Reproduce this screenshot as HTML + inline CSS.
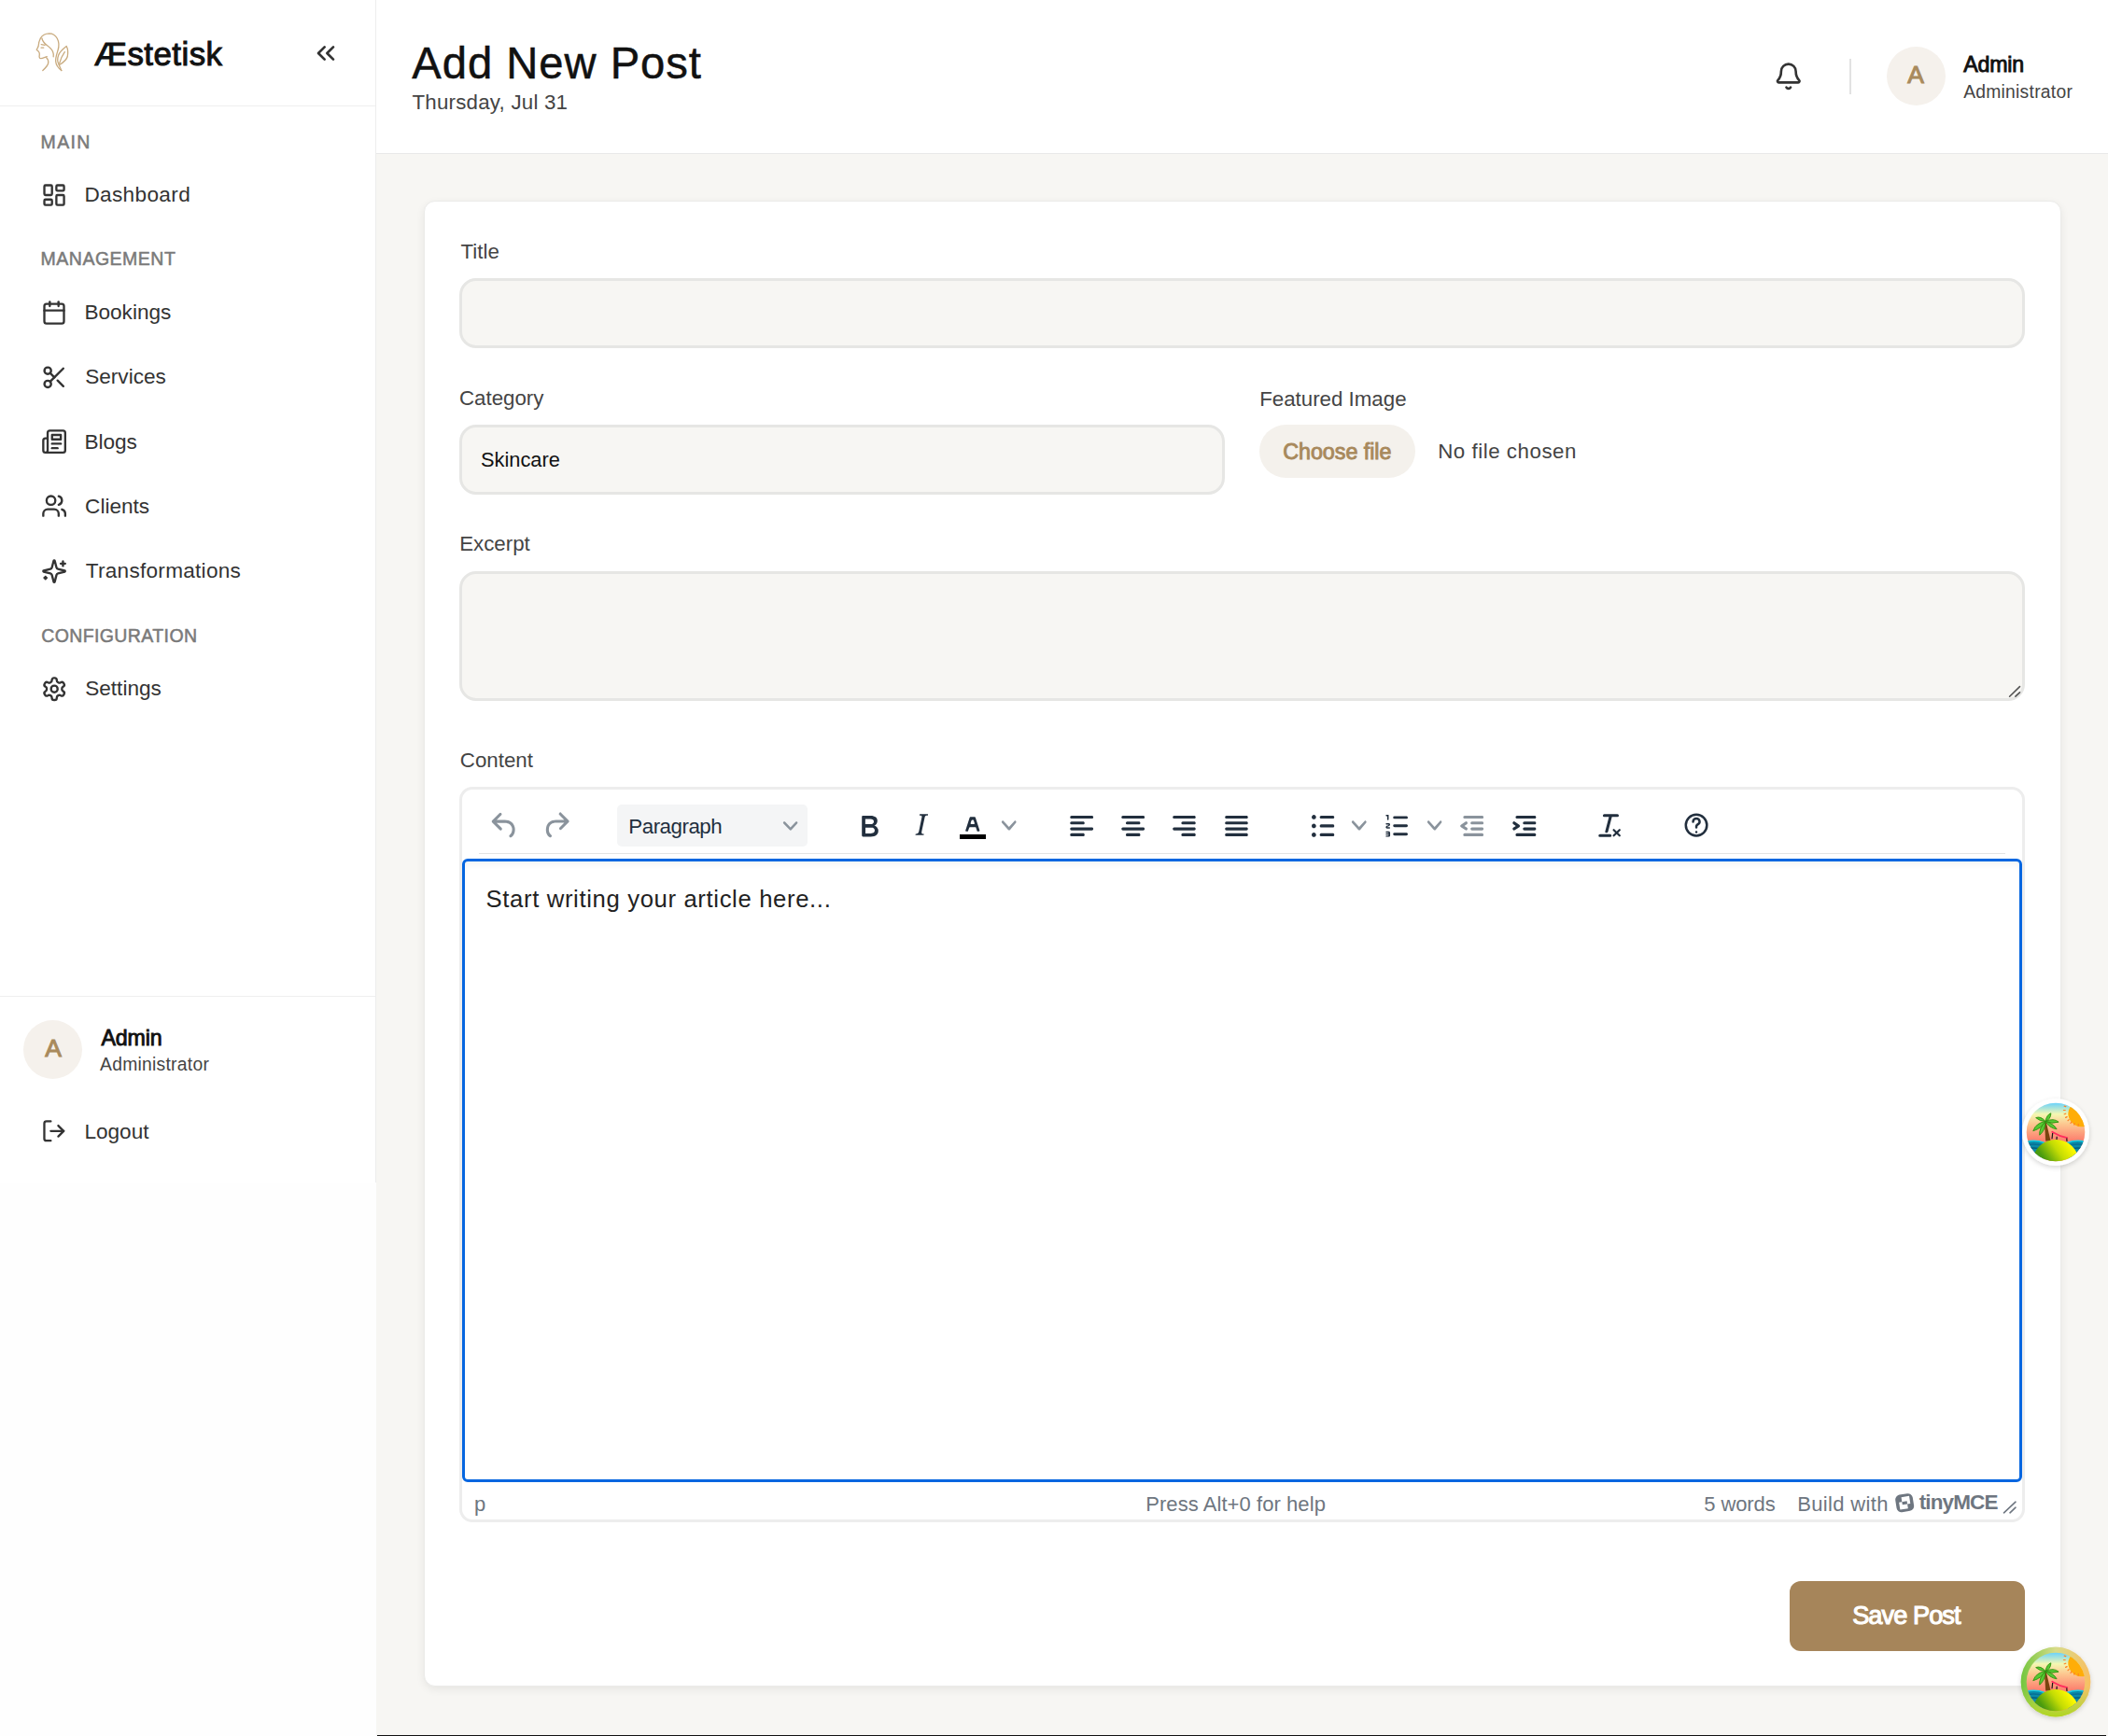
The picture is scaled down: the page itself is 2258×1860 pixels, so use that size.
<!DOCTYPE html>
<html><head><meta charset="utf-8"><title>Add New Post</title>
<style>
html,body{margin:0;padding:0;}
body{width:2258px;height:1860px;position:relative;overflow:hidden;background:#f7f6f3;font-family:"Liberation Sans", sans-serif;}
.t{position:absolute;line-height:1;white-space:nowrap;}
.b{position:absolute;box-sizing:border-box;}
.i{position:absolute;overflow:visible;}
</style></head><body>

<div class="b" style="left:0px;top:0px;width:403px;height:1860px;background:#fefefe;"></div>
<div class="b" style="left:0px;top:0px;width:403px;height:1267px;background:#fff;border-right:1px solid #ededed;"></div>
<div class="b" style="left:0px;top:113px;width:402px;height:1px;background:#efefef;"></div>
<div class="b" style="left:0px;top:1067px;width:402px;height:1px;background:#efefef;"></div>
<div class="b" style="left:403px;top:0px;width:1855px;height:165px;background:#fff;border-bottom:1px solid #e9e9e9;"></div>
<div class="b" style="left:404px;top:1859px;width:1852px;height:1px;background:#111;"></div>
<div class="b" style="left:454px;top:215px;width:1753.5px;height:1592px;background:#fff;border-radius:12px;border:1px solid #ebebe9;box-shadow:0 3px 10px rgba(0,0,0,0.07);"></div>
<svg class="i" style="left:30px;top:28px" width="55" height="55" viewBox="0 0 55 55" fill="none" stroke="#c9ab7f" stroke-width="1.3" stroke-linecap="round" stroke-linejoin="round">
<path d="M13.3 13.0 C15 10 18.5 7.9 22.8 7.8 C26.5 7.8 29.5 10 31.3 13.2 C33.2 16.7 33.4 21.5 32 26 C30.6 30.5 29.3 34 29.7 38 C30.1 42 32.5 45 35.8 47.5"/>
<path d="M13.3 13.2 C12 15.5 11.3 18.5 11.1 21.5 C10.5 23.2 9.6 24.5 9.2 25.3 L11.1 26.9 C12.2 28 12.5 29.3 12.3 30.5 C12 31.8 11.8 33.3 12.6 34.2 C13.5 34.9 15.5 34.4 17.5 33.6 L20.3 32.6"/>
<path d="M19.6 33.6 C21.5 35.5 22.2 37.5 21.6 40 C21 42.5 18.5 45 15.8 47.5"/>
<path d="M14.9 13.0 C15.5 16 17.5 18.5 20.3 20.6 C23.3 22.8 25.5 24.7 26.6 27.5 C27.5 29.8 27.6 31.5 27.2 32.8"/>
<path d="M14.2 19.6 L18 20.3"/><path d="M14 23.1 L16.7 23.2"/>
<path d="M33.3 41.8 C31.5 38.5 31.2 35 32.6 31.2 C34 27.6 37.5 24.3 41.2 21.5 C42.6 24 43 28.5 42.3 32.5 C41.3 36.5 38.5 38.5 33.6 41.5"/>
<path d="M33.6 40.2 C35 35 36.8 31 39.3 27.6"/>
<path d="M33.3 41.8 L35.8 47.5"/>
</svg>
<div class="t" style="left:101.05px;top:41.45px;font-size:34.9px;color:#111;-webkit-text-stroke:1.0px #111;letter-spacing:0.457px;">Æstetisk</div>
<svg class="i" style="left:332.53px;top:40.90px" width="32.01" height="32.01" viewBox="0 0 24 24" fill="none" stroke="#333" stroke-width="2" stroke-linecap="round" stroke-linejoin="round"><path d="m11 17-5-5 5-5"/><path d="m18 17-5-5 5-5"/></svg>
<div class="t" style="left:43.60px;top:143.19px;font-size:19.5px;color:#7a7a7a;-webkit-text-stroke:0.5px #7a7a7a;letter-spacing:1.367px;">MAIN</div>
<div class="t" style="left:43.60px;top:267.79px;font-size:19.5px;color:#7a7a7a;-webkit-text-stroke:0.5px #7a7a7a;letter-spacing:0.500px;">MANAGEMENT</div>
<div class="t" style="left:44.20px;top:671.99px;font-size:19.5px;color:#7a7a7a;-webkit-text-stroke:0.5px #7a7a7a;letter-spacing:0.392px;">CONFIGURATION</div>
<div class="t" style="left:90.40px;top:198.26px;font-size:22.6px;color:#333;letter-spacing:0.350px;">Dashboard</div>
<div class="t" style="left:90.40px;top:323.56px;font-size:22.6px;color:#333;">Bookings</div>
<div class="t" style="left:91.20px;top:392.86px;font-size:22.6px;color:#333;">Services</div>
<div class="t" style="left:90.40px;top:462.66px;font-size:22.6px;color:#333;">Blogs</div>
<div class="t" style="left:91.10px;top:532.36px;font-size:22.6px;color:#333;">Clients</div>
<div class="t" style="left:91.70px;top:600.86px;font-size:22.6px;color:#333;letter-spacing:0.271px;">Transformations</div>
<div class="t" style="left:91.20px;top:726.56px;font-size:22.6px;color:#333;">Settings</div>
<div class="t" style="left:90.40px;top:1201.66px;font-size:22.6px;color:#333;">Logout</div>
<svg class="i" style="left:44.06px;top:194.96px" width="28.08" height="28.08" viewBox="0 0 24 24" fill="none" stroke="#333" stroke-width="2" stroke-linecap="round" stroke-linejoin="round"><rect width="7" height="9" x="3" y="3" rx="1"/><rect width="7" height="5" x="14" y="3" rx="1"/><rect width="7" height="9" x="14" y="12" rx="1"/><rect width="7" height="5" x="3" y="16" rx="1"/></svg>
<svg class="i" style="left:44.07px;top:320.83px" width="28.00" height="28.00" viewBox="0 0 24 24" fill="none" stroke="#333" stroke-width="2" stroke-linecap="round" stroke-linejoin="round"><path d="M8 2v4"/><path d="M16 2v4"/><rect width="18" height="18" x="3" y="4" rx="2"/><path d="M3 10h18"/></svg>
<svg class="i" style="left:43.72px;top:389.72px" width="28.62" height="28.62" viewBox="0 0 24 24" fill="none" stroke="#333" stroke-width="2" stroke-linecap="round" stroke-linejoin="round"><circle cx="6" cy="6" r="3"/><path d="M8.12 8.12 12 12"/><path d="M20 4 8.12 15.88"/><circle cx="6" cy="18" r="3"/><path d="M14.8 14.8 20 20"/></svg>
<svg class="i" style="left:44.03px;top:458.82px" width="28.20" height="28.20" viewBox="0 0 24 24" fill="none" stroke="#333" stroke-width="2" stroke-linecap="round" stroke-linejoin="round"><path d="M4 22h16a2 2 0 0 0 2-2V4a2 2 0 0 0-2-2H8a2 2 0 0 0-2 2v16a2 2 0 0 1-2 2Zm0 0a2 2 0 0 1-2-2v-9c0-1.1.9-2 2-2h2"/><path d="M18 14h-8"/><path d="M15 18h-5"/><path d="M10 6h8v4h-8V6Z"/></svg>
<svg class="i" style="left:44.02px;top:527.85px" width="28.23" height="28.23" viewBox="0 0 24 24" fill="none" stroke="#333" stroke-width="2" stroke-linecap="round" stroke-linejoin="round"><path d="M16 21v-2a4 4 0 0 0-4-4H6a4 4 0 0 0-4 4v2"/><circle cx="9" cy="7" r="4"/><path d="M22 21v-2a4 4 0 0 0-3-3.87"/><path d="M16 3.13a4 4 0 0 1 0 7.75"/></svg>
<svg class="i" style="left:44.03px;top:597.73px" width="28.14" height="28.14" viewBox="0 0 24 24" fill="none" stroke="#333" stroke-width="2" stroke-linecap="round" stroke-linejoin="round"><path d="M9.937 15.5A2 2 0 0 0 8.5 14.063l-6.135-1.582a.5.5 0 0 1 0-.962L8.5 9.936A2 2 0 0 0 9.937 8.5l1.582-6.135a.5.5 0 0 1 .963 0L14.063 8.5A2 2 0 0 0 15.5 9.937l6.135 1.581a.5.5 0 0 1 0 .964L15.5 14.063a2 2 0 0 0-1.437 1.437l-1.582 6.135a.5.5 0 0 1-.963 0z"/><path d="M20 3v4"/><path d="M22 5h-4"/><path d="M4 17v2"/><path d="M5 18H3"/></svg>
<svg class="i" style="left:43.75px;top:723.82px" width="28.39" height="28.39" viewBox="0 0 24 24" fill="none" stroke="#333" stroke-width="2" stroke-linecap="round" stroke-linejoin="round"><path d="M12.22 2h-.44a2 2 0 0 0-2 2v.18a2 2 0 0 1-1 1.73l-.43.25a2 2 0 0 1-2 0l-.15-.08a2 2 0 0 0-2.73.73l-.22.38a2 2 0 0 0 .73 2.73l.15.1a2 2 0 0 1 1 1.72v.51a2 2 0 0 1-1 1.74l-.15.09a2 2 0 0 0-.73 2.73l.22.38a2 2 0 0 0 2.73.73l.15-.08a2 2 0 0 1 2 0l.43.25a2 2 0 0 1 1 1.73V20a2 2 0 0 0 2 2h.44a2 2 0 0 0 2-2v-.18a2 2 0 0 1 1-1.73l.43-.25a2 2 0 0 1 2 0l.15.08a2 2 0 0 0 2.73-.73l.22-.39a2 2 0 0 0-.73-2.73l-.15-.08a2 2 0 0 1-1-1.74v-.5a2 2 0 0 1 1-1.74l.15-.09a2 2 0 0 0 .73-2.73l-.22-.38a2 2 0 0 0-2.73-.73l-.15.08a2 2 0 0 1-2 0l-.43-.25a2 2 0 0 1-1-1.73V4a2 2 0 0 0-2-2z"/><circle cx="12" cy="12" r="3"/></svg>
<svg class="i" style="left:43.90px;top:1198.10px" width="27.66" height="27.66" viewBox="0 0 24 24" fill="none" stroke="#333" stroke-width="2" stroke-linecap="round" stroke-linejoin="round"><path d="M9 21H5a2 2 0 0 1-2-2V5a2 2 0 0 1 2-2h4"/><polyline points="16 17 21 12 16 7"/><line x1="21" x2="9" y1="12" y2="12"/></svg>
<div class="b" style="left:25px;top:1093px;width:63px;height:63px;border-radius:50%;background:#f5f1ec;"></div>
<div class="t" style="left:48.15px;top:1109.66px;font-size:26.5px;color:#a98a5c;-webkit-text-stroke:1.0px #a98a5c;">A</div>
<div class="t" style="left:108.45px;top:1100.66px;font-size:23.2px;color:#111;-webkit-text-stroke:0.9px #111;letter-spacing:-0.150px;">Admin</div>
<div class="t" style="left:107.05px;top:1130.86px;font-size:19.3px;color:#444;letter-spacing:0.267px;">Administrator</div>
<div class="t" style="left:441.35px;top:43.64px;font-size:47.2px;color:#111;-webkit-text-stroke:0.5px #111;letter-spacing:0.964px;">Add New Post</div>
<div class="t" style="left:441.45px;top:99.32px;font-size:22.3px;color:#444;letter-spacing:0.227px;">Thursday, Jul 31</div>
<svg class="i" style="left:1899.87px;top:66.09px" width="31.50" height="31.50" viewBox="0 0 24 24" fill="none" stroke="#333" stroke-width="2" stroke-linecap="round" stroke-linejoin="round"><path d="M10.268 21a2 2 0 0 0 3.464 0"/><path d="M3.262 15.326A1 1 0 0 0 4 17h16a1 1 0 0 0 .74-1.673C19.41 13.956 18 12.499 18 8A6 6 0 0 0 6 8c0 4.499-1.411 5.956-2.738 7.326"/></svg>
<div class="b" style="left:1981px;top:63px;width:1.5px;height:38px;background:#e2e2e2;"></div>
<div class="b" style="left:2021px;top:50px;width:63px;height:63px;border-radius:50%;background:#f5f1ec;"></div>
<div class="t" style="left:2043.35px;top:67.36px;font-size:26.5px;color:#a98a5c;-webkit-text-stroke:1.0px #a98a5c;">A</div>
<div class="t" style="left:2103.15px;top:58.26px;font-size:23.2px;color:#111;-webkit-text-stroke:0.9px #111;letter-spacing:-0.150px;">Admin</div>
<div class="t" style="left:2103.15px;top:89.36px;font-size:19.3px;color:#444;letter-spacing:0.258px;">Administrator</div>
<div class="t" style="left:493.55px;top:259.02px;font-size:22.3px;color:#444;">Title</div>
<div class="b" style="left:492px;top:298px;width:1677px;height:75px;border:3px solid #e6e6e4;background:#f7f6f3;border-radius:18px;"></div>
<div class="t" style="left:491.95px;top:415.82px;font-size:22.3px;color:#444;">Category</div>
<div class="b" style="left:492px;top:455px;width:820px;height:75px;border:3px solid #e6e6e4;background:#f7f6f3;border-radius:18px;"></div>
<div class="t" style="left:515.00px;top:482.04px;font-size:21.8px;color:#111;">Skincare</div>
<div class="t" style="left:1349.15px;top:416.62px;font-size:22.3px;color:#444;">Featured Image</div>
<div class="b" style="left:1349px;top:455px;width:167px;height:57px;border-radius:29px;background:#f4f1ec;"></div>
<div class="t" style="left:1374.20px;top:473.17px;font-size:23.3px;color:#a8895c;-webkit-text-stroke:0.9px #a8895c;letter-spacing:-0.030px;">Choose file</div>
<div class="t" style="left:1540.15px;top:472.52px;font-size:22.3px;color:#444;letter-spacing:0.538px;">No file chosen</div>
<div class="t" style="left:492.15px;top:571.82px;font-size:22.3px;color:#444;">Excerpt</div>
<div class="b" style="left:492px;top:612px;width:1677px;height:139px;border:3px solid #e6e6e4;background:#f7f6f3;border-radius:18px;"></div>
<svg class="i" style="left:2150px;top:733px" width="16" height="16" viewBox="0 0 16 16" stroke="#555" stroke-width="1.6" stroke-linecap="round"><path d="M2.6 13.2 L13.5 2.6"/><path d="M8.9 13.2 L13.5 8.8"/></svg>
<div class="t" style="left:492.85px;top:804.02px;font-size:22.3px;color:#444;">Content</div>
<div class="b" style="left:492px;top:843px;width:1677px;height:788px;border:3px solid #ededed;border-radius:14px;background:#fff;"></div>
<svg class="i" style="left:522.09px;top:865.86px" width="37.51" height="37.51" viewBox="0 0 24 24" preserveAspectRatio="none"><path fill="#8a939c" fill-rule="evenodd" d="M6.4 8H12c3.7 0 6.2 2 6.8 5.1.6 2.7-.4 5.6-2.3 6.8a1 1 0 0 1-1-1.8c1.1-.6 1.8-2.7 1.4-4.6-.5-2.1-2.1-3.5-4.9-3.5H6.4l3.3 3.3a1 1 0 1 1-1.4 1.4l-5-5a1 1 0 0 1 0-1.4l5-5a1 1 0 0 1 1.4 1.4L6.4 8Z"/></svg>
<svg class="i" style="left:577.19px;top:866.19px" width="37.35" height="37.35" viewBox="0 0 24 24" preserveAspectRatio="none"><path fill="#8a939c" fill-rule="evenodd" d="M17.6 10H12c-2.8 0-4.4 1.4-4.9 3.5-.4 2 .3 4 1.4 4.6a1 1 0 1 1-1 1.8c-2-1.2-2.9-4.1-2.3-6.8.6-3 3-5.1 6.8-5.1h5.6l-3.3-3.3a1 1 0 1 1 1.4-1.4l5 5a1 1 0 0 1 0 1.4l-5 5a1 1 0 0 1-1.4-1.4l3.3-3.3Z"/></svg>
<div class="b" style="left:661px;top:862px;width:204px;height:44.5px;border-radius:5px;background:#f4f5f6;"></div>
<div class="t" style="left:673.35px;top:875.12px;font-size:22.3px;color:#222f3e;letter-spacing:-0.475px;">Paragraph</div>
<svg class="i" style="left:839.11px;top:876.87px" width="15.39" height="15.87" viewBox="0 0 10 10" preserveAspectRatio="none"><path fill="#8a939c" fill-rule="evenodd" d="M8.7 2.2c.3-.3.8-.3 1 0 .4.4.4.9 0 1.2L5.7 7.8c-.3.3-.9.3-1.2 0L.2 3.4a.8.8 0 0 1 0-1.2c.3-.3.8-.3 1.1 0L5 6l3.7-3.8Z"/></svg>
<svg class="i" style="left:912.00px;top:866.40px" width="38.42" height="38.42" viewBox="0 0 24 24" preserveAspectRatio="none"><path fill="#222f3e" fill-rule="evenodd" d="M7.8 19c-.3 0-.5 0-.6-.2l-.2-.5V5.7c0-.2 0-.4.2-.5l.6-.2h5c1.5 0 2.7.3 3.5 1 .7.6 1.1 1.4 1.1 2.5a3 3 0 0 1-.6 1.9c-.4.6-1 1-1.6 1.2.4.1.9.3 1.3.6s.8.7 1 1.2c.4.4.5 1 .5 1.6 0 1.3-.4 2.3-1.3 3-.8.7-2.1 1-3.8 1H7.8Zm5-8.3c.6 0 1.2-.1 1.6-.5.4-.3.6-.7.6-1.3 0-1.1-.8-1.7-2.3-1.7H9.3v3.5h3.4Zm.5 6c.7 0 1.3-.1 1.7-.4.4-.4.6-.9.6-1.5s-.2-1-.7-1.4c-.4-.3-1-.4-2-.4H9.4v3.8h4Z"/></svg>
<svg class="i" style="left:968.21px;top:865.46px" width="37.47" height="37.47" viewBox="0 0 24 24" preserveAspectRatio="none"><path fill="#222f3e" fill-rule="evenodd" d="m16.7 4.7-.1.9h-.3c-.6 0-1 0-1.4.3-.3.3-.4.6-.5 1.1l-2.1 9.8v.6c0 .5.4.8 1.4.8h.2l-.2.8H8l.2-.8h.2c1.1 0 1.8-.5 2-1.5l2-9.8.1-.5c0-.6-.4-.8-1.4-.8h-.3l.2-.9h5.8Z"/></svg>
<svg class="i" style="left:1021.82px;top:866.30px" width="39.57" height="37.20" viewBox="0 0 24 24" preserveAspectRatio="none"><path fill="#222f3e" fill-rule="evenodd" d="M8.7 16h-.8a.5.5 0 0 1-.5-.6l2.7-9c.1-.3.3-.4.5-.4h2.8c.2 0 .4.1.5.4l2.7 9a.5.5 0 0 1-.5.6h-.8a.5.5 0 0 1-.4-.4l-.7-2.2c0-.3-.3-.4-.5-.4h-3.4c-.2 0-.4.1-.5.4l-.7 2.2c0 .3-.2.4-.4.4Zm2.6-7.6-.6 2a.5.5 0 0 0 .5.6h1.6a.5.5 0 0 0 .5-.6l-.6-2c0-.3-.3-.4-.5-.4h-.4c-.2 0-.4.1-.5.4Z"/></svg>
<div class="b" style="left:1027.6px;top:894.2px;width:28.100000000000136px;height:4.599999999999909px;background:#000;"></div>
<svg class="i" style="left:1073.11px;top:876.47px" width="15.59" height="16.86" viewBox="0 0 10 10" preserveAspectRatio="none"><path fill="#8a939c" fill-rule="evenodd" d="M8.7 2.2c.3-.3.8-.3 1 0 .4.4.4.9 0 1.2L5.7 7.8c-.3.3-.9.3-1.2 0L.2 3.4a.8.8 0 0 1 0-1.2c.3-.3.8-.3 1.1 0L5 6l3.7-3.8Z"/></svg>
<svg class="i" style="left:1140.18px;top:865.81px" width="37.35" height="37.89" viewBox="0 0 24 24" preserveAspectRatio="none"><path fill="#222f3e" fill-rule="evenodd" d="M5 5h14c.6 0 1 .4 1 1s-.4 1-1 1H5a1 1 0 1 1 0-2Zm0 4h8c.6 0 1 .4 1 1s-.4 1-1 1H5a1 1 0 1 1 0-2Zm0 8h8c.6 0 1 .4 1 1s-.4 1-1 1H5a1 1 0 0 1 0-2Zm0-4h14c.6 0 1 .4 1 1s-.4 1-1 1H5a1 1 0 0 1 0-2Z"/></svg>
<svg class="i" style="left:1195.28px;top:865.81px" width="37.35" height="37.89" viewBox="0 0 24 24" preserveAspectRatio="none"><path fill="#222f3e" fill-rule="evenodd" d="M5 5h14c.6 0 1 .4 1 1s-.4 1-1 1H5a1 1 0 1 1 0-2Zm3 4h8c.6 0 1 .4 1 1s-.4 1-1 1H8a1 1 0 1 1 0-2Zm0 8h8c.6 0 1 .4 1 1s-.4 1-1 1H8a1 1 0 0 1 0-2Zm-3-4h14c.6 0 1 .4 1 1s-.4 1-1 1H5a1 1 0 0 1 0-2Z"/></svg>
<svg class="i" style="left:1250.45px;top:865.81px" width="36.90" height="37.89" viewBox="0 0 24 24" preserveAspectRatio="none"><path fill="#222f3e" fill-rule="evenodd" d="M5 5h14c.6 0 1 .4 1 1s-.4 1-1 1H5a1 1 0 1 1 0-2Zm6 4h8c.6 0 1 .4 1 1s-.4 1-1 1h-8a1 1 0 0 1 0-2Zm0 8h8c.6 0 1 .4 1 1s-.4 1-1 1h-8a1 1 0 0 1 0-2Zm-6-4h14c.6 0 1 .4 1 1s-.4 1-1 1H5a1 1 0 0 1 0-2Z"/></svg>
<svg class="i" style="left:1306.45px;top:865.81px" width="36.90" height="37.89" viewBox="0 0 24 24" preserveAspectRatio="none"><path fill="#222f3e" fill-rule="evenodd" d="M5 5h14c.6 0 1 .4 1 1s-.4 1-1 1H5a1 1 0 1 1 0-2Zm0 4h14c.6 0 1 .4 1 1s-.4 1-1 1H5a1 1 0 1 1 0-2Zm0 4h14c.6 0 1 .4 1 1s-.4 1-1 1H5a1 1 0 0 1 0-2Zm0 4h14c.6 0 1 .4 1 1s-.4 1-1 1H5a1 1 0 0 1 0-2Z"/></svg>
<svg class="i" style="left:1398.07px;top:865.69px" width="37.47" height="37.92" viewBox="0 0 24 24" preserveAspectRatio="none"><path fill="#222f3e" fill-rule="evenodd" d="M11 5h8c.6 0 1 .4 1 1s-.4 1-1 1h-8a1 1 0 0 1 0-2Zm0 6h8c.6 0 1 .4 1 1s-.4 1-1 1h-8a1 1 0 0 1 0-2Zm0 6h8c.6 0 1 .4 1 1s-.4 1-1 1h-8a1 1 0 0 1 0-2ZM4.5 6c0-.4.1-.8.4-1 .3-.4.7-.5 1.1-.5.4 0 .8.1 1 .4.4.3.5.7.5 1.1 0 .4-.1.8-.4 1-.3.4-.7.5-1.1.5-.4 0-.8-.1-1-.4-.4-.3-.5-.7-.5-1.1Zm0 6c0-.4.1-.8.4-1 .3-.4.7-.5 1.1-.5.4 0 .8.1 1 .4.4.3.5.7.5 1.1 0 .4-.1.8-.4 1-.3.4-.7.5-1.1.5-.4 0-.8-.1-1-.4-.4-.3-.5-.7-.5-1.1Zm0 6c0-.4.1-.8.4-1 .3-.4.7-.5 1.1-.5.4 0 .8.1 1 .4.4.3.5.7.5 1.1 0 .4-.1.8-.4 1-.3.4-.7.5-1.1.5-.4 0-.8-.1-1-.4-.4-.3-.5-.7-.5-1.1Z"/></svg>
<svg class="i" style="left:1448.01px;top:876.47px" width="15.69" height="16.86" viewBox="0 0 10 10" preserveAspectRatio="none"><path fill="#8a939c" fill-rule="evenodd" d="M8.7 2.2c.3-.3.8-.3 1 0 .4.4.4.9 0 1.2L5.7 7.8c-.3.3-.9.3-1.2 0L.2 3.4a.8.8 0 0 1 0-1.2c.3-.3.8-.3 1.1 0L5 6l3.7-3.8Z"/></svg>
<svg class="i" style="left:1477.78px;top:866.88px" width="37.92" height="35.55" viewBox="0 0 24 24" preserveAspectRatio="none"><path fill="#222f3e" fill-rule="evenodd" d="M10 17h8c.6 0 1 .4 1 1s-.4 1-1 1h-8a1 1 0 0 1 0-2Zm0-6h8c.6 0 1 .4 1 1s-.4 1-1 1h-8a1 1 0 0 1 0-2Zm0-6h8c.6 0 1 .4 1 1s-.4 1-1 1h-8a1 1 0 1 1 0-2ZM6 4v3.5c0 .3-.2.5-.5.5a.5.5 0 0 1-.5-.5V5h-.5a.5.5 0 0 1 0-1H6Zm-1 8.8.2.2h1.3c.3 0 .5.2.5.5s-.2.5-.5.5H4.9a1 1 0 0 1-.9-1V13c0-.4.3-.8.6-1l1.2-.4.2-.3a.2.2 0 0 0-.2-.2H4.5a.5.5 0 0 1-.5-.5c0-.3.2-.5.5-.5h1.6c.5 0 .9.4.9 1v.1c0 .4-.3.8-.6 1l-1.2.4-.2.3ZM7 17v2c0 .6-.4 1-1 1H4.5a.5.5 0 0 1 0-1h1.2c.2 0 .3-.1.3-.3 0-.2-.1-.3-.3-.3H4.4a.4.4 0 1 1 0-.8h1.3c.2 0 .3-.1.3-.3 0-.2-.1-.3-.3-.3H4.5a.5.5 0 1 1 0-1H6c.6 0 1 .4 1 1Z"/></svg>
<svg class="i" style="left:1528.91px;top:876.47px" width="15.39" height="16.86" viewBox="0 0 10 10" preserveAspectRatio="none"><path fill="#8a939c" fill-rule="evenodd" d="M8.7 2.2c.3-.3.8-.3 1 0 .4.4.4.9 0 1.2L5.7 7.8c-.3.3-.9.3-1.2 0L.2 3.4a.8.8 0 0 1 0-1.2c.3-.3.8-.3 1.1 0L5 6l3.7-3.8Z"/></svg>
<svg class="i" style="left:1558.07px;top:865.81px" width="37.35" height="37.89" viewBox="0 0 24 24" preserveAspectRatio="none"><path fill="#8a939c" fill-rule="evenodd" d="M7 5h12c.6 0 1 .4 1 1s-.4 1-1 1H7a1 1 0 1 1 0-2Zm5 4h7c.6 0 1 .4 1 1s-.4 1-1 1h-7a1 1 0 0 1 0-2Zm0 4h7c.6 0 1 .4 1 1s-.4 1-1 1h-7a1 1 0 0 1 0-2Zm-5 4h12a1 1 0 0 1 0 2H7a1 1 0 0 1 0-2Zm1.6-3.8a1 1 0 0 1-1.2 1.6l-3-2a1 1 0 0 1 0-1.6l3-2a1 1 0 0 1 1.2 1.6L6.8 12l1.8 1.2Z"/></svg>
<svg class="i" style="left:1613.63px;top:865.81px" width="37.65" height="37.89" viewBox="0 0 24 24" preserveAspectRatio="none"><path fill="#222f3e" fill-rule="evenodd" d="M7 5h12c.6 0 1 .4 1 1s-.4 1-1 1H7a1 1 0 1 1 0-2Zm5 4h7c.6 0 1 .4 1 1s-.4 1-1 1h-7a1 1 0 0 1 0-2Zm0 4h7c.6 0 1 .4 1 1s-.4 1-1 1h-7a1 1 0 0 1 0-2Zm-5 4h12a1 1 0 0 1 0 2H7a1 1 0 0 1 0-2Zm-2.6-3.8L6.2 12l-1.8-1.2a1 1 0 0 1 1.2-1.6l3 2a1 1 0 0 1 0 1.6l-3 2a1 1 0 1 1-1.2-1.6Z"/></svg>
<svg class="i" style="left:1706.17px;top:866.33px" width="37.40" height="37.05" viewBox="0 0 24 24" preserveAspectRatio="none"><path fill="#222f3e" fill-rule="evenodd" d="M13.2 6a1 1 0 0 1 0 .2l-2.6 10a1 1 0 0 1-1 .8h-.2a.8.8 0 0 1-.8-1l2.6-10H8a1 1 0 1 1 0-2h9a1 1 0 0 1 0 2h-3.8ZM5 18h7a1 1 0 0 1 0 2H5a1 1 0 0 1 0-2Zm13 1.5L16.5 18 15 19.5a.7.7 0 0 1-1-1l1.5-1.5-1.5-1.5a.7.7 0 0 1 1-1l1.5 1.5 1.5-1.5a.7.7 0 0 1 1 1L17.5 17l1.5 1.5a.7.7 0 0 1-1 1Z"/></svg>
<svg class="i" style="left:1801.69px;top:869.48px" width="30.12" height="30.24" viewBox="0 0 24 24" preserveAspectRatio="none"><path fill="#222f3e" fill-rule="evenodd" d="M12 5.3a3.8 3.8 0 0 1 3.8 3.8c0 1.4-.8 2.3-1.8 3-.6.3-1 .8-1 1.2v.5a1 1 0 0 1-2 0v-.5c0-1.4.8-2.3 1.8-3 .6-.3 1-.8 1-1.2a1.8 1.8 0 1 0-3.6 0 1 1 0 1 1-2 0A3.8 3.8 0 0 1 12 5.3Zm0 11.5a1 1 0 1 1 0 2 1 1 0 0 1 0-2Z M12 22a10 10 0 1 1 0-20 10 10 0 0 1 0 20Zm0-2a8 8 0 1 0 0-16 8 8 0 0 0 0 16Z"/></svg>
<div class="b" style="left:513px;top:914px;width:1635px;height:1px;background:#e3e3e3;"></div>
<div class="b" style="left:495px;top:920px;width:1671px;height:667.5px;border:3px solid #0566e0;border-radius:6px;background:#fff;box-shadow:inset 0 6px 8px -4px rgba(0,0,0,0.06);"></div>
<div class="t" style="left:520.55px;top:950.74px;font-size:25.7px;color:#222;letter-spacing:0.633px;">Start writing your article here...</div>
<div class="t" style="left:508.10px;top:1601.17px;font-size:22px;color:#6e7680;">p</div>
<div class="t" style="left:1227.20px;top:1601.07px;font-size:22px;color:#6e7680;letter-spacing:0.068px;">Press Alt+0 for help</div>
<div class="t" style="left:1825.30px;top:1601.17px;font-size:22px;color:#6e7680;letter-spacing:-0.100px;">5 words</div>
<div class="t" style="left:1925.30px;top:1601.17px;font-size:22px;color:#6e7680;letter-spacing:0.333px;">Build with</div>
<svg class="i" style="left:2030px;top:1600px" width="20.4" height="20.4" viewBox="0 0 20 20"><g transform="rotate(-9 10 10)"><rect x="0.8" y="0.8" width="18.4" height="18.4" rx="5" fill="#6e7680"/><path fill="#fff" fill-rule="evenodd" d="M4.2 8.6H12.6V16.4H4.2Z M7.4 3.6H15.8V11.6H7.4Z"/></g></svg>
<div class="t" style="left:2055.75px;top:1599.35px;font-size:22.5px;color:#6e7680;font-weight:700;letter-spacing:-0.883px;">tinyMCE</div>
<svg class="i" style="left:2144px;top:1606px" width="18" height="18" viewBox="0 0 18 18" stroke="#6e7680" stroke-width="1.6" stroke-linecap="round"><path d="M2.5 14.8 L15 3.2"/><path d="M9 14.8 L15 9.2"/></svg>
<div class="b" style="left:1917px;top:1694px;width:252px;height:75px;border-radius:12px;background:#a6855a;"></div>
<div class="t" style="left:1984.15px;top:1717.47px;font-size:27.2px;color:#fff;-webkit-text-stroke:1.1px #fff;letter-spacing:-0.938px;">Save Post</div>
<svg class="i" style="left:2160px;top:1170.7px" width="84" height="84" viewBox="-42 -42 84 84">
<defs>
<linearGradient id="sky1212" x1="0" y1="-31" x2="0" y2="8" gradientUnits="userSpaceOnUse"><stop offset="0" stop-color="#6ed3f9"/><stop offset="0.3" stop-color="#f4f8b2"/><stop offset="0.58" stop-color="#fdc68f"/><stop offset="1" stop-color="#fc8370"/></linearGradient>
<linearGradient id="isl1212" x1="-14" y1="26" x2="10" y2="8" gradientUnits="userSpaceOnUse"><stop offset="0" stop-color="#4a9c0e"/><stop offset="0.55" stop-color="#c4dc04"/><stop offset="1" stop-color="#fbf800"/></linearGradient>
<linearGradient id="rg11212" x1="-37" y1="0" x2="37" y2="0" gradientUnits="userSpaceOnUse"><stop offset="0" stop-color="#74c63e"/><stop offset="0.5" stop-color="#d8dc8a"/><stop offset="1" stop-color="#f8bf62"/></linearGradient>
<linearGradient id="rg21212" x1="0" y1="5" x2="0" y2="37" gradientUnits="userSpaceOnUse"><stop offset="0" stop-color="#a6d23a" stop-opacity="0"/><stop offset="1" stop-color="#b2d520" stop-opacity="1"/></linearGradient>
<clipPath id="cl1212"><circle r="31.3"/></clipPath>
<filter id="sh1212" x="-30%" y="-30%" width="160%" height="160%"><feDropShadow dx="0" dy="2" stdDeviation="2.5" flood-opacity="0.16"/></filter>
</defs>
<circle r="36" fill="#fff" filter="url(#sh1212)"/>
<g clip-path="url(#cl1212)">
<rect x="-32" y="-32" width="64" height="64" fill="url(#sky1212)"/>
<ellipse cx="27" cy="-19" rx="14" ry="13" transform="rotate(35 27 -19)" fill="#ffad08"/>
<g stroke="#ff7f22" stroke-width="1.2" stroke-linecap="round"><path d="M9.2 -27.8 l1.6 0.4"/><path d="M8.5 -23.5 l1.7 0"/><path d="M9.2 -19.3 l1.6 -0.5"/><path d="M10.6 -15.6 l1.5 -0.8"/><path d="M13 -12.3 l1.2 -1.1"/><path d="M16 -9.5 l0.9 -1.4"/><path d="M19.8 -7.8 l0.4 -1.6"/><path d="M24.2 -7 l0 -1.6"/></g>
<path d="M-31 10.2 Q-22 7.5 -13 11.5 L-13 32 L-32 32 Z" fill="#0b8aa8"/>
<path d="M13 11.5 Q22 7.5 31 10.2 L32 32 L13 32 Z" fill="#0b8aa8"/>
<g fill="none" stroke-width="1.6"><path d="M-31 10.3 Q-22 7.6 -12 11.6" stroke="#12cfe6"/><path d="M12 11.6 Q22 7.6 31 10.3" stroke="#12cfe6"/>
<path d="M-31 14 Q-22 11.5 -12 15.2" stroke="#077094"/><path d="M12 15.2 Q22 11.5 31 14" stroke="#077094"/>
<path d="M-31 18 Q-22 15.5 -12 19.2" stroke="#065e7e"/><path d="M12 19.2 Q22 15.5 31 18" stroke="#065e7e"/></g>
<path d="M-12.2 -11 L-10.4 -11.5 L-5.4 9.5 L-10.8 9.5 Z" fill="#7a4410"/>
<g fill="#56c933" stroke="#2f8f0f" stroke-width="0.9" stroke-linejoin="round">
<path d="M-11 -11.5 Q-16 -17.5 -21.3 -15.4 Q-17 -11.5 -11 -11.5 Z"/>
<path d="M-11 -11.5 Q-9.5 -19 -5.1 -20.2 Q-5.5 -13.5 -11 -11.5 Z"/>
<path d="M-11 -11.5 Q-2 -15.5 3.1 -10.8 Q-4 -8.5 -11 -11.5 Z"/>
<path d="M-11 -11.5 Q-2 -9 1.1 -3.2 Q-7 -4.5 -11 -11.5 Z"/>
<path d="M-11 -11.5 Q-21 -10 -24.2 -1.3 Q-15 -4 -11 -11.5 Z"/>
<path d="M-11 -11.5 Q-18 -4 -17.3 3.2 Q-11 -2 -11 -11.5 Z"/>
</g>
<path d="M-3.8 -0.3 Q4 4.5 12.2 6.2" stroke="#ff2d5e" stroke-width="1.7" fill="none" stroke-linecap="round"/>
<path d="M-3.3 1 L-4 7.2 M1.2 4.8 L1 8.4 M11.8 6.5 L12 10" stroke="#151515" stroke-width="1.2"/>
<ellipse cx="0" cy="30" rx="24" ry="22" fill="url(#isl1212)"/>
</g>
</svg>
<svg class="i" style="left:2159.6px;top:1760px" width="84" height="84" viewBox="-42 -42 84 84">
<defs>
<linearGradient id="sky1802" x1="0" y1="-31" x2="0" y2="8" gradientUnits="userSpaceOnUse"><stop offset="0" stop-color="#6ed3f9"/><stop offset="0.3" stop-color="#f4f8b2"/><stop offset="0.58" stop-color="#fdc68f"/><stop offset="1" stop-color="#fc8370"/></linearGradient>
<linearGradient id="isl1802" x1="-14" y1="26" x2="10" y2="8" gradientUnits="userSpaceOnUse"><stop offset="0" stop-color="#4a9c0e"/><stop offset="0.55" stop-color="#c4dc04"/><stop offset="1" stop-color="#fbf800"/></linearGradient>
<linearGradient id="rg11802" x1="-37" y1="0" x2="37" y2="0" gradientUnits="userSpaceOnUse"><stop offset="0" stop-color="#74c63e"/><stop offset="0.5" stop-color="#d8dc8a"/><stop offset="1" stop-color="#f8bf62"/></linearGradient>
<linearGradient id="rg21802" x1="0" y1="5" x2="0" y2="37" gradientUnits="userSpaceOnUse"><stop offset="0" stop-color="#a6d23a" stop-opacity="0"/><stop offset="1" stop-color="#b2d520" stop-opacity="1"/></linearGradient>
<clipPath id="cl1802"><circle r="31.3"/></clipPath>
<filter id="sh1802" x="-30%" y="-30%" width="160%" height="160%"><feDropShadow dx="0" dy="2" stdDeviation="2.5" flood-opacity="0.16"/></filter>
</defs>
<circle r="37.4" fill="url(#rg11802)" filter="url(#sh1802)"/><circle r="37.4" fill="url(#rg21802)"/>
<g clip-path="url(#cl1802)">
<rect x="-32" y="-32" width="64" height="64" fill="url(#sky1802)"/>
<ellipse cx="27" cy="-19" rx="14" ry="13" transform="rotate(35 27 -19)" fill="#ffad08"/>
<g stroke="#ff7f22" stroke-width="1.2" stroke-linecap="round"><path d="M9.2 -27.8 l1.6 0.4"/><path d="M8.5 -23.5 l1.7 0"/><path d="M9.2 -19.3 l1.6 -0.5"/><path d="M10.6 -15.6 l1.5 -0.8"/><path d="M13 -12.3 l1.2 -1.1"/><path d="M16 -9.5 l0.9 -1.4"/><path d="M19.8 -7.8 l0.4 -1.6"/><path d="M24.2 -7 l0 -1.6"/></g>
<path d="M-31 10.2 Q-22 7.5 -13 11.5 L-13 32 L-32 32 Z" fill="#0b8aa8"/>
<path d="M13 11.5 Q22 7.5 31 10.2 L32 32 L13 32 Z" fill="#0b8aa8"/>
<g fill="none" stroke-width="1.6"><path d="M-31 10.3 Q-22 7.6 -12 11.6" stroke="#12cfe6"/><path d="M12 11.6 Q22 7.6 31 10.3" stroke="#12cfe6"/>
<path d="M-31 14 Q-22 11.5 -12 15.2" stroke="#077094"/><path d="M12 15.2 Q22 11.5 31 14" stroke="#077094"/>
<path d="M-31 18 Q-22 15.5 -12 19.2" stroke="#065e7e"/><path d="M12 19.2 Q22 15.5 31 18" stroke="#065e7e"/></g>
<path d="M-12.2 -11 L-10.4 -11.5 L-5.4 9.5 L-10.8 9.5 Z" fill="#7a4410"/>
<g fill="#56c933" stroke="#2f8f0f" stroke-width="0.9" stroke-linejoin="round">
<path d="M-11 -11.5 Q-16 -17.5 -21.3 -15.4 Q-17 -11.5 -11 -11.5 Z"/>
<path d="M-11 -11.5 Q-9.5 -19 -5.1 -20.2 Q-5.5 -13.5 -11 -11.5 Z"/>
<path d="M-11 -11.5 Q-2 -15.5 3.1 -10.8 Q-4 -8.5 -11 -11.5 Z"/>
<path d="M-11 -11.5 Q-2 -9 1.1 -3.2 Q-7 -4.5 -11 -11.5 Z"/>
<path d="M-11 -11.5 Q-21 -10 -24.2 -1.3 Q-15 -4 -11 -11.5 Z"/>
<path d="M-11 -11.5 Q-18 -4 -17.3 3.2 Q-11 -2 -11 -11.5 Z"/>
</g>
<path d="M-3.8 -0.3 Q4 4.5 12.2 6.2" stroke="#ff2d5e" stroke-width="1.7" fill="none" stroke-linecap="round"/>
<path d="M-3.3 1 L-4 7.2 M1.2 4.8 L1 8.4 M11.8 6.5 L12 10" stroke="#151515" stroke-width="1.2"/>
<ellipse cx="0" cy="30" rx="24" ry="22" fill="url(#isl1802)"/>
</g>
</svg>
</body></html>
